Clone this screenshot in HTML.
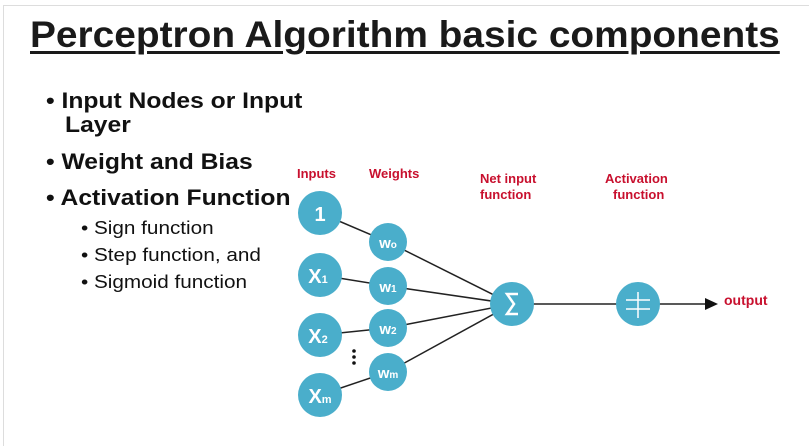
<!DOCTYPE html>
<html><head><style>
body{margin:0;width:809px;height:442px;background:#fff;position:relative;overflow:hidden;font-family:"Liberation Sans",sans-serif;color:#111}
.frame{position:absolute;left:3px;top:5px;width:810px;height:440px;border-left:1px solid #ddd;border-top:1px solid #ddd}
h1{position:absolute;left:30px;top:14px;margin:0;font-size:37px;font-weight:bold;text-decoration:underline;text-decoration-thickness:3px;text-underline-offset:4px;color:#1a1a1a;transform:scaleX(1.05);transform-origin:0 0;white-space:nowrap}
.b{position:absolute;font-size:22px;font-weight:bold;line-height:24px;transform:scaleX(1.12);transform-origin:0 0;white-space:nowrap}
.s{position:absolute;font-size:18px;line-height:20px;transform:scaleX(1.15);transform-origin:0 0;white-space:nowrap}
</style></head><body>
<div class="frame"></div>
<h1>Perceptron Algorithm basic components</h1>
<div class="b" style="left:46px;top:89px">• Input Nodes or Input<br><span style="padding-left:17px">Layer</span></div>
<div class="b" style="left:46px;top:150px">• Weight and Bias</div>
<div class="b" style="left:46px;top:186px">• Activation Function</div>
<div class="s" style="left:81px;top:218px">• Sign function</div>
<div class="s" style="left:81px;top:245px">• Step function, and</div>
<div class="s" style="left:81px;top:272px">• Sigmoid function</div>
<svg width="809" height="442" style="position:absolute;left:0;top:0" font-family="Liberation Sans,sans-serif">
<g stroke="#222" stroke-width="1.5">
<line x1="320" y1="213" x2="388" y2="242"/><line x1="320" y1="275" x2="388" y2="286"/>
<line x1="320" y1="335" x2="388" y2="328"/><line x1="320" y1="395" x2="388" y2="372"/>
<line x1="388" y1="242" x2="512" y2="304"/><line x1="388" y1="286" x2="512" y2="304"/>
<line x1="388" y1="328" x2="512" y2="304"/><line x1="388" y1="372" x2="512" y2="304"/>
<line x1="512" y1="304" x2="708" y2="304"/>
</g>
<polygon points="718,304 705,298 705,310" fill="#111"/>
<g fill="#4aaecb">
<circle cx="320" cy="213" r="22"/><circle cx="320" cy="275" r="22"/><circle cx="320" cy="335" r="22"/><circle cx="320" cy="395" r="22"/>
<circle cx="388" cy="242" r="19"/><circle cx="388" cy="286" r="19"/><circle cx="388" cy="328" r="19"/><circle cx="388" cy="372" r="19"/>
<circle cx="512" cy="304" r="22"/><circle cx="638" cy="304" r="22"/>
</g>
<g fill="#fff" font-weight="bold" text-anchor="middle">
<text x="320" y="221" font-size="20">1</text>
<text x="318" y="283" font-size="20">X<tspan font-size="11">1</tspan></text>
<text x="318" y="343" font-size="20">X<tspan font-size="11">2</tspan></text>
<text x="320" y="403" font-size="20">X<tspan font-size="11">m</tspan></text>
<text x="388" y="248" font-size="15">w<tspan font-size="10">o</tspan></text>
<text x="388" y="292" font-size="15">w<tspan font-size="10">1</tspan></text>
<text x="388" y="334" font-size="15">w<tspan font-size="10">2</tspan></text>
<text x="388" y="378" font-size="15">w<tspan font-size="10">m</tspan></text>
</g>
<path d="M518 294 H507 L514 304 L507 314 H518" stroke="#fff" stroke-width="2.5" fill="none"/>
<g stroke="#fff" stroke-width="1.5"><line x1="638" y1="292" x2="638" y2="318"/><line x1="626" y1="300" x2="650" y2="300"/><line x1="626" y1="309" x2="650" y2="309"/></g>
<g fill="#111"><circle cx="354" cy="351" r="1.8"/><circle cx="354" cy="357" r="1.8"/><circle cx="354" cy="363" r="1.8"/></g>
<g fill="#c8102e" font-size="13" font-weight="bold">
<text x="297" y="178">Inputs</text><text x="369" y="178">Weights</text>
<text x="480" y="183">Net input</text><text x="480" y="199">function</text>
<text x="605" y="183">Activation</text><text x="613" y="199">function</text>
<text x="724" y="305" font-size="14">output</text>
</g>
</svg>
</body></html>
